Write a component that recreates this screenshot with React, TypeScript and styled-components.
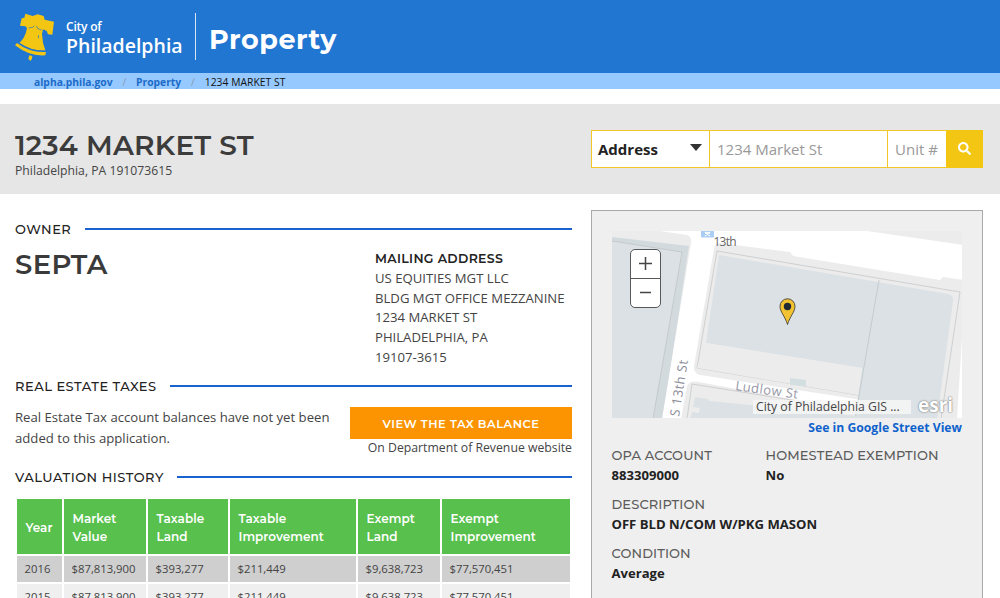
import React from "react";
import styled, { createGlobalStyle } from "styled-components";
import { FaSearch } from "react-icons/fa";

const body = `"Open Sans", "Noto Sans", sans-serif`;
const display = `Montserrat, Inter, sans-serif`;

const GlobalStyle = createGlobalStyle`
  *, *::before, *::after { box-sizing: border-box; }
  body {
    margin: 0;
    background: #fff;
    color: #444;
    font-family: ${body};
    font-size: 13px;
    overflow: hidden;
  }
`;

const Page = styled.div`
  width: 1000px;
  height: 598px;
  overflow: hidden;
  display: flex;
  flex-direction: column;
`;

const Header = styled.header`
  flex: none;
  height: 73px;
  background: #2176d2;
  color: #fff;
  display: flex;
  align-items: flex-start;
  padding: 13px 14px 0;
`;

const Bell = styled.svg`
  flex: none;
  width: 40px;
  height: 48px;
`;

const Wordmark = styled.div`
  width: 129px;
  padding-left: 12px;
  padding-top: 5px;
  font-weight: 600;
  white-space: nowrap;
`;

const CityOf = styled.div`
  font-size: 12px;
  line-height: 17px;
  letter-spacing: -0.2px;
`;

const CityName = styled.div`
  font-size: 19.5px;
  line-height: 22px;
`;

const HeaderRule = styled.div`
  width: 1px;
  height: 47px;
  margin-left: 12px;
  background: #d5e5f7;
`;

const AppName = styled.h1`
  margin: 9px 0 0 13px;
  font-family: ${display};
  font-size: 27px;
  font-weight: 700;
  line-height: 35px;
  letter-spacing: 0.55px;
`;

const Breadcrumbs = styled.nav`
  flex: none;
  height: 16px;
  background: #96c9ff;
  display: flex;
  align-items: center;
  padding: 1px 0 0 34px;
  font-size: 10.3px;
  line-height: 14px;
  color: #111;
  white-space: nowrap;
`;

const Crumb = styled.a`
  color: #1c6bc8;
  font-weight: 700;
`;

const Slash = styled.span`
  width: 23.5px;
  text-align: center;
  color: #8b9bb0;
`;

const CurrentCrumb = styled.span`
  letter-spacing: 0.05px;
`;

const TitleBand = styled.section`
  flex: none;
  height: 90px;
  margin-top: 15px;
  padding: 26px 17px 0 15px;
  background: #e6e6e6;
  display: flex;
  justify-content: space-between;
`;

const Address = styled.h2`
  margin: 0 0 2px;
  font-family: ${display};
  font-size: 28px;
  font-weight: 600;
  line-height: 30px;
  letter-spacing: 0.2px;
  color: #3c3c3c;
  white-space: nowrap;
`;

const Locality = styled.div`
  font-size: 12.2px;
  line-height: 18px;
`;

const SearchForm = styled.form`
  width: 392px;
  height: 38px;
  display: grid;
  grid-template-columns: 117px 178px 59px 37px;
  grid-template-rows: 36px;
  background: #fff;
  border: 1px solid #f3c72a;
  border-right: 0;
  font-size: 15px;
  line-height: 37px;
`;

const SearchField = styled.div<{ $divided?: boolean }>`
  padding-left: ${(p) => (p.$divided ? 7 : 6)}px;
  border-left: ${(p) => (p.$divided ? "1px solid #f3c72a" : "0")};
  color: #999;
  white-space: nowrap;
`;

const SearchKind = styled(SearchField)`
  display: flex;
  align-items: center;
  justify-content: space-between;
  padding-right: 7px;
  color: #222;
  font-weight: 700;
`;

const Caret = styled.span`
  border: 6px solid transparent;
  border-top: 7px solid #333;
  border-bottom: 0;
  margin-top: -3px;
`;

const SearchButton = styled.button`
  height: 38px;
  margin: -1px 0;
  padding: 0 0 2px;
  border: 0;
  background: #f3c613;
  color: #fff;
  display: flex;
  align-items: center;
  justify-content: center;
  font-size: 13px;
`;

const Columns = styled.main`
  flex: 1;
  min-height: 0;
  display: grid;
  grid-template-columns: 557px 392px;
  gap: 19px;
  padding: 15.5px 17px 0 15px;
`;

const Main = styled.div`
  min-width: 0;
`;

const SectionHeading = styled.h3<{ $space: number }>`
  display: flex;
  align-items: center;
  gap: 13.5px;
  margin: ${(p) => p.$space}px 0 0;
  font-family: ${display};
  font-size: 13px;
  font-weight: 500;
  line-height: 18px;
  letter-spacing: 0.5px;
  color: #222;
  white-space: nowrap;
  &::after {
    content: "";
    flex: 1;
    height: 2px;
    background: #1a62d0;
  }
`;

const OwnerRow = styled.div`
  display: grid;
  grid-template-columns: 360px 1fr;
  padding-top: 9px;
`;

const OwnerName = styled.div`
  font-family: ${display};
  font-size: 27.5px;
  font-weight: 600;
  line-height: 35px;
  letter-spacing: 0.4px;
  color: #3a3a3a;
`;

const Mailing = styled.address`
  padding-top: 2px;
  font-style: normal;
  font-size: 13.15px;
  line-height: 19.8px;
  white-space: nowrap;
`;

const MailingTitle = styled.div`
  font-family: ${display};
  font-size: 12.5px;
  font-weight: 600;
  letter-spacing: 0.33px;
  color: #222;
`;

const TaxRow = styled.div`
  display: flex;
  justify-content: space-between;
  padding-top: 12px;
`;

const TaxNote = styled.p`
  margin: 0;
  width: 330px;
  font-size: 13.15px;
  line-height: 21px;
  white-space: nowrap;
`;

const TaxAction = styled.div`
  width: 222px;
  text-align: right;
  font-size: 12.25px;
  line-height: 18px;
  white-space: nowrap;
`;

const TaxButton = styled.a`
  display: block;
  height: 32px;
  background: #fb9400;
  color: #fff;
  font-family: ${display};
  font-size: 11.5px;
  font-weight: 600;
  line-height: 34px;
  letter-spacing: 0.5px;
  text-align: center;
`;

const Table = styled.table`
  width: 557px;
  table-layout: fixed;
  border-collapse: separate;
  border-spacing: 2px;
  margin-top: 11px;
`;

const Th = styled.th`
  height: 55px;
  padding: 4px 0 0 8.5px;
  background: #58c04d;
  color: #fff;
  font-family: ${display};
  font-size: 12px;
  font-weight: 600;
  line-height: 18px;
  letter-spacing: 0.05px;
  text-align: left;
  white-space: pre-line;
`;

const Td = styled.td<{ $dark: boolean }>`
  height: 26px;
  padding: 0 0 0 7.5px;
  background: ${(p) => (p.$dark ? "#cfcfcf" : "#efefef")};
  font-size: 11.3px;
  line-height: 18px;
`;

const Panel = styled.aside`
  height: 420px;
  background: #efefef;
  border: 1px solid #a9a9a9;
  padding: 20px 20px 0;
`;

const MapFrame = styled.div`
  position: relative;
  height: 187.5px;
  overflow: hidden;
`;

const MapDrawing = styled.svg`
  display: block;
  width: 351px;
  height: 188px;
  font-family: "Open Sans", "Noto Sans", sans-serif;
`;

const ZoomControl = styled.div`
  position: absolute;
  left: 18px;
  top: 18px;
  width: 31px;
  height: 59px;
  border: 1px solid #57585a;
  border-radius: 5px;
  background: #fff;
  display: grid;
  grid-template-rows: 1fr 1fr;
`;

const ZoomButton = styled.div`
  display: flex;
  align-items: center;
  justify-content: center;
  & + & { border-top: 1px solid #57585a; }
`;

const Attribution = styled.div`
  position: absolute;
  left: 141px;
  bottom: 4.5px;
  width: 158px;
  height: 14px;
  padding-left: 3px;
  background: rgba(246, 246, 246, 0.85);
  font-size: 12.2px;
  line-height: 14px;
  white-space: nowrap;
`;

const EsriMark = styled.div`
  position: absolute;
  left: 306px;
  bottom: 1px;
  color: #fff;
  font-size: 19px;
  font-weight: 700;
  line-height: 24px;
  text-shadow: 0 0 2px #777, 0 0 1px #888;
`;

const StreetView = styled.a`
  display: block;
  text-align: right;
  color: #1062cc;
  font-size: 12.2px;
  font-weight: 700;
  line-height: 19px;
  white-space: nowrap;
`;

const Facts = styled.dl`
  display: grid;
  grid-template-columns: 154px 1fr;
  row-gap: 9px;
  margin: 8px 0 0 -0.5px;
`;

const Fact = styled.div<{ $wide?: boolean }>`
  grid-column: ${(p) => (p.$wide ? "1 / -1" : "auto")};
  white-space: nowrap;
`;

const FactLabel = styled.dt`
  font-family: ${display};
  font-size: 13px;
  font-weight: 500;
  line-height: 20px;
  letter-spacing: 0.12px;
  color: #5c5c5c;
`;

const FactValue = styled.dd`
  margin: 0;
  color: #222;
  font-size: 13.1px;
  font-weight: 700;
  line-height: 20px;
`;

const columns = [
  { label: "Year", width: 45 },
  { label: "Market\nValue", width: 82 },
  { label: "Taxable\nLand", width: 80 },
  { label: "Taxable\nImprovement", width: 126 },
  { label: "Exempt\nLand", width: 82 },
  { label: "Exempt\nImprovement", width: 128 },
];

const valuations = [
  ["2016", "$87,813,900", "$393,277", "$211,449", "$9,638,723", "$77,570,451"],
  ["2015", "$87,813,900", "$393,277", "$211,449", "$9,638,723", "$77,570,451"],
];

const facts = [
  { label: "OPA ACCOUNT", value: "883309000" },
  { label: "HOMESTEAD EXEMPTION", value: "No" },
  { label: "DESCRIPTION", value: "OFF BLD N/COM W/PKG MASON", wide: true },
  { label: "CONDITION", value: "Average", wide: true },
];

function LibertyBell() {
  return (
    <Bell viewBox="42 37 120 144" fill="#f3c613" aria-hidden="true">
      <path d="M76 39 L98 46 L113 41 L131 46 L134 57 L162 63 L157 102 L144 101 L140 91 L129 86 L126 100 Q127 127 136 149 Q99 153 58 127 Q76 111 81 82 L76 77 L60 75 L65 53 L73 51 Z" />
      <path d="M51 127 Q90 157 138 154 L136 164 Q89 168 45 134 Z" />
      <path d="M88 164 L97 166 L96 174 L91 181 L85 174 Z" />
      <path d="M86 82 L98 80 L103 75 M110 76 L113 84 L125 88" stroke="#2176d2" strokeWidth="2" fill="none" />
      <path d="M116 103 L115 113" stroke="#2176d2" strokeWidth="2" fill="none" />
      <path d="M57 127 Q92 154 137 151" stroke="#2176d2" strokeWidth="2.5" fill="none" />
    </Bell>
  );
}

function StreetMap() {
  return (
    <MapDrawing viewBox="612 231 351 188">
      <rect x="612" y="231" width="351" height="188" fill="#ececec" />
      <path d="M612 237 L689 246 L663 419 L612 419 Z" fill="#d3dadd" />
      <path d="M612 241 L682 252 L653 419 L612 419 Z" fill="#dbe1e4" />
      <path d="M612 241 L682 252 L653 419" fill="none" stroke="#c0c5c7" strokeWidth=".8" />
      <path d="M660 231 L867 231 L963 245 L963 280 L943 277 L940 280 L793 256 L790 252 L719 243 Q715 243 714 249 L694 366 Q693 373 700 375 L862 400 L860 412 L699 382 Q689 380 687 386 L681 419 L662 419 L691 243 Q692 237 687 235 Z" fill="#fff" />
      <path d="M963 321 L957 419 L963 419 Z" fill="#fff" />
      <path d="M717 251 L960 292 L941 419 M717 251 L697 368 L858 395 M687 419 L692 384 L860 411" fill="none" stroke="#c6c8c9" strokeWidth=".8" />
      <path d="M719 255 L948 294 Q954 296 953 301 L937 419 L855 419 L862 368 L706 343 Z" fill="#dbe1e4" />
      <path d="M706 343 L862 368 L858 395 L697 368 Z" fill="#ececec" />
      <path d="M879 280 L855 419" stroke="#bfc5c8" strokeWidth=".8" />
      <path d="M695 397 L708 399 L709 401 L857 416 L857 419 L690 419 L692 412 L699 413 L700 408 L693 407 Z" fill="#dbe1e4" />
      <path d="M790 378 L806 380 L806 386 L790 385 Z" fill="#d3dee1" />
      <rect x="701" y="229" width="13" height="8.5" rx="1" fill="#aacdf3" />
      <path d="M705 232 L710 236 M710 232 L705 236 M705 233 H710" stroke="#fff" strokeWidth="1.3" />
      <text x="713.5" y="245.5" fontSize="12" fill="#666" textLength="23">13th</text>
      <text transform="translate(679 417) rotate(-81)" fontSize="13" fill="#8b8d98" textLength="57">S 13th St</text>
      <text transform="translate(735 390) rotate(8)" fontSize="13" fill="#9698a8" textLength="63">Ludlow St</text>
      <path d="M787.5 324.5 C785 316 780 312 780 306.3 A7.5 7.5 0 0 1 795 306.3 C795 312 790 316 787.5 324.5 Z" fill="#f2c230" stroke="#55503f" strokeWidth="1" />
      <circle cx="787.5" cy="306.5" r="3.7" fill="#222a33" />
    </MapDrawing>
  );
}

export default function App() {
  return (
    <Page>
      <GlobalStyle />
      <Header>
        <LibertyBell />
        <Wordmark>
          <CityOf>City of</CityOf>
          <CityName>Philadelphia</CityName>
        </Wordmark>
        <HeaderRule />
        <AppName>Property</AppName>
      </Header>
      <Breadcrumbs>
        <Crumb>alpha.phila.gov</Crumb>
        <Slash>/</Slash>
        <Crumb>Property</Crumb>
        <Slash>/</Slash>
        <CurrentCrumb>1234 MARKET ST</CurrentCrumb>
      </Breadcrumbs>
      <TitleBand>
        <div>
          <Address>1234 MARKET ST</Address>
          <Locality>Philadelphia, PA 191073615</Locality>
        </div>
        <SearchForm>
          <SearchKind>
            Address
            <Caret />
          </SearchKind>
          <SearchField $divided>1234 Market St</SearchField>
          <SearchField $divided>Unit #</SearchField>
          <SearchButton type="button" aria-label="Search">
            <FaSearch />
          </SearchButton>
        </SearchForm>
      </TitleBand>
      <Columns>
        <Main>
          <SectionHeading $space={10.5}>OWNER</SectionHeading>
          <OwnerRow>
            <OwnerName>SEPTA</OwnerName>
            <Mailing>
              <MailingTitle>MAILING ADDRESS</MailingTitle>
              US EQUITIES MGT LLC
              <br />
              BLDG MGT OFFICE MEZZANINE
              <br />
              1234 MARKET ST
              <br />
              PHILADELPHIA, PA
              <br />
              19107-3615
            </Mailing>
          </OwnerRow>
          <SectionHeading $space={9}>REAL ESTATE TAXES</SectionHeading>
          <TaxRow>
            <TaxNote>
              Real Estate Tax account balances have not yet been
              <br />
              added to this application.
            </TaxNote>
            <TaxAction>
              <TaxButton>VIEW THE TAX BALANCE</TaxButton>
              On Department of Revenue website
            </TaxAction>
          </TaxRow>
          <SectionHeading $space={11}>VALUATION HISTORY</SectionHeading>
          <Table>
            <colgroup>
              {columns.map((c) => (
                <col key={c.label} width={c.width} />
              ))}
            </colgroup>
            <thead>
              <tr>
                {columns.map((c) => (
                  <Th key={c.label}>{c.label}</Th>
                ))}
              </tr>
            </thead>
            <tbody>
              {valuations.map((row, r) => (
                <tr key={row[0]}>
                  {row.map((cell, i) => (
                    <Td key={i} $dark={r % 2 === 0}>
                      {cell}
                    </Td>
                  ))}
                </tr>
              ))}
            </tbody>
          </Table>
        </Main>
        <Panel>
          <MapFrame>
            <StreetMap />
            <ZoomControl>
              <ZoomButton>
                <svg width="15" height="15" viewBox="0 0 15 15" stroke="#444" strokeWidth="1.5">
                  <path d="M1 7.5 H14 M7.5 1 V14" />
                </svg>
              </ZoomButton>
              <ZoomButton>
                <svg width="15" height="15" viewBox="0 0 15 15" stroke="#444" strokeWidth="1.5">
                  <path d="M2 7.5 H13" />
                </svg>
              </ZoomButton>
            </ZoomControl>
            <Attribution>City of Philadelphia GIS ...</Attribution>
            <EsriMark>esri</EsriMark>
          </MapFrame>
          <StreetView>See in Google Street View</StreetView>
          <Facts>
            {facts.map((f) => (
              <Fact key={f.label} $wide={f.wide}>
                <FactLabel>{f.label}</FactLabel>
                <FactValue>{f.value}</FactValue>
              </Fact>
            ))}
          </Facts>
        </Panel>
      </Columns>
    </Page>
  );
}
